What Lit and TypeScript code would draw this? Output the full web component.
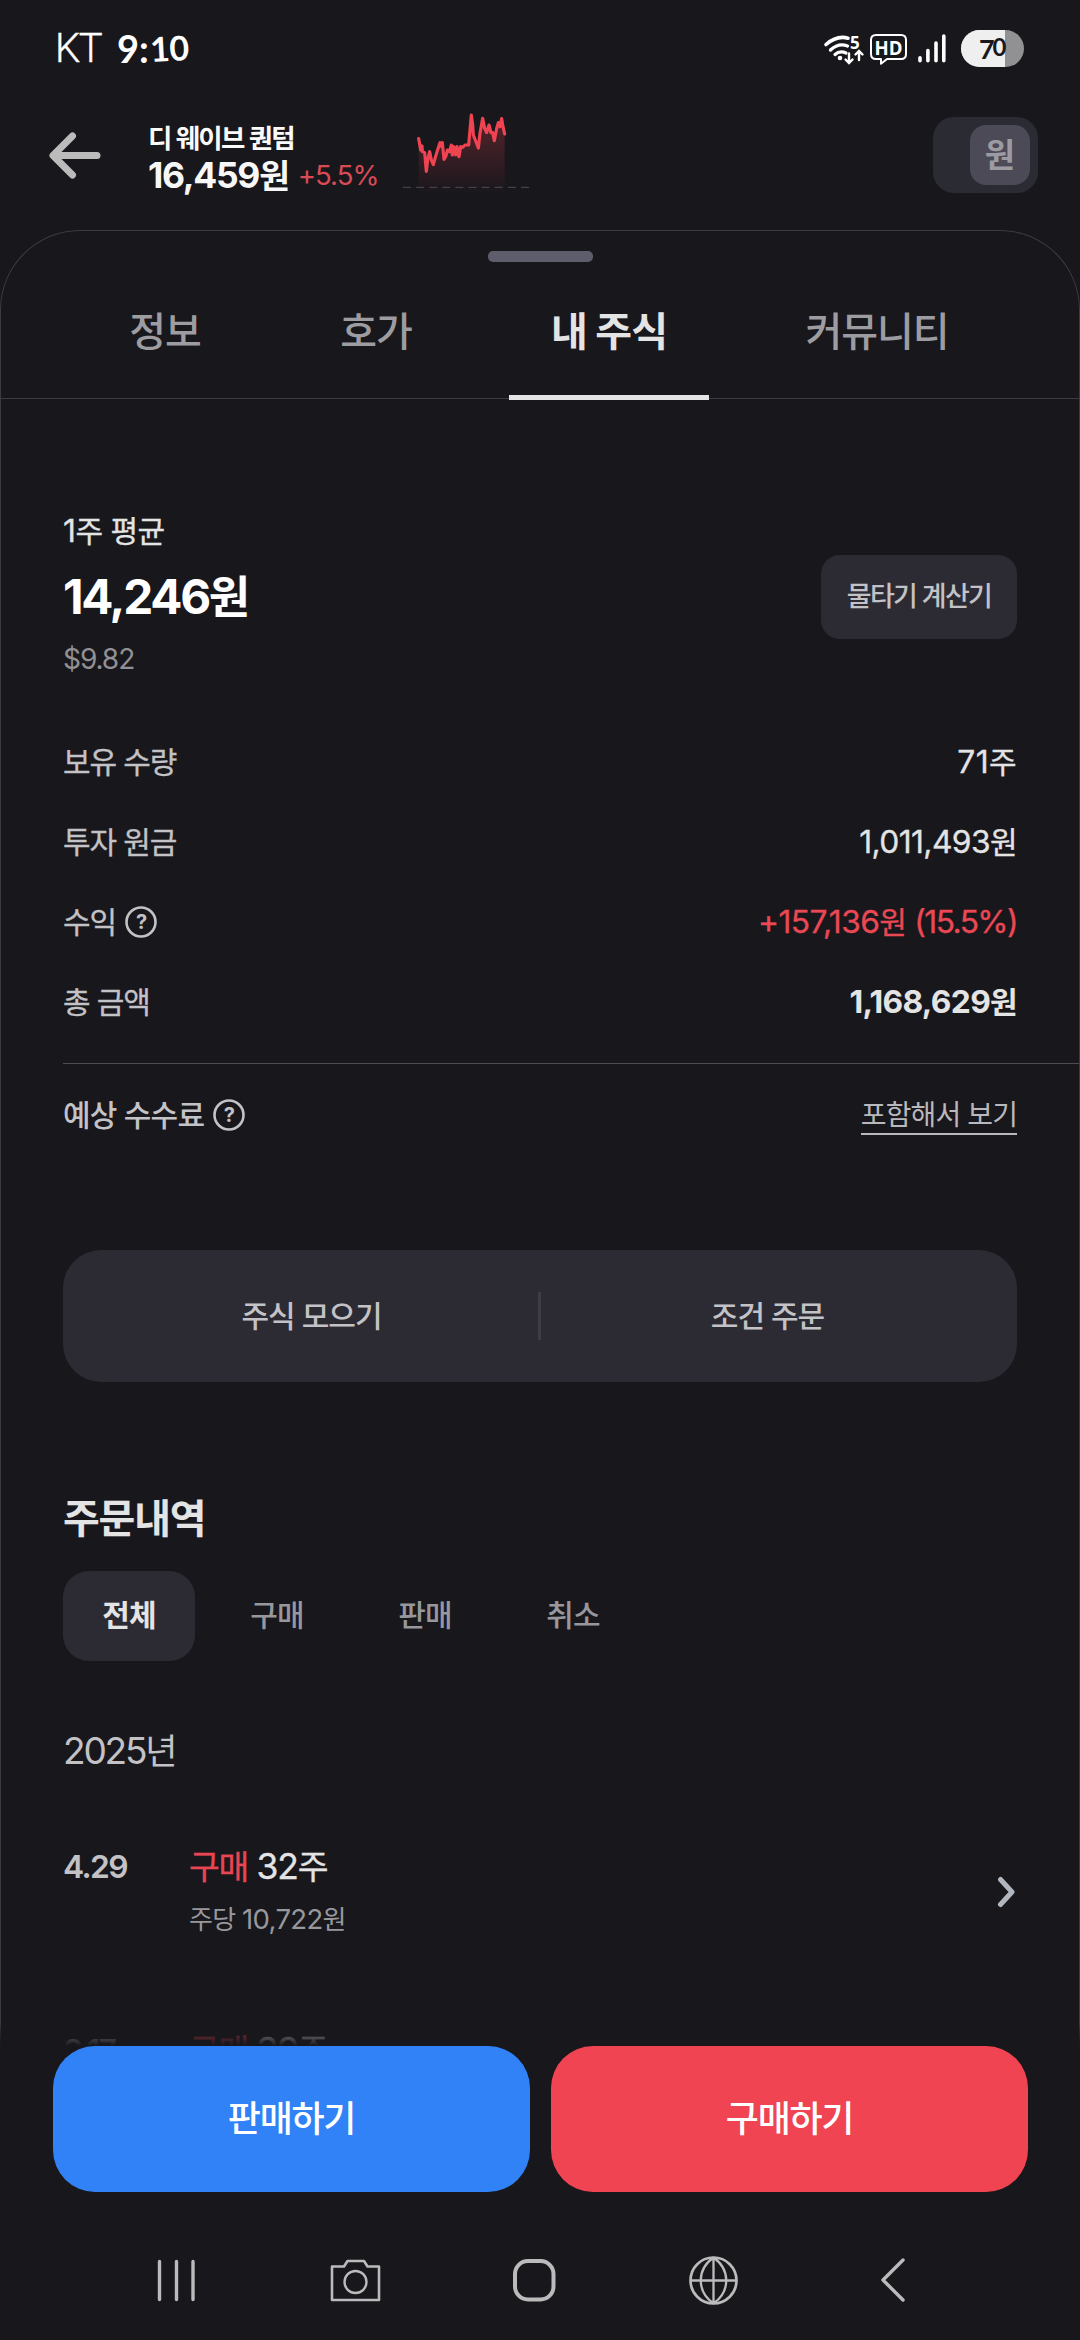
import { LitElement, html, css, svg } from "lit";
import { customElement, property } from "lit/decorators.js";
import { classMap } from "lit/directives/class-map.js";

const base = css`
  :host {
    display: block;
    font-family: Inter, "Noto Sans CJK KR", sans-serif;
    font-kerning: normal;
  }
  * {
    box-sizing: border-box;
  }
  svg {
    display: block;
    flex: none;
  }
  .n {
    font-size: 1.06em;
  }
`;

/** Splits mixed text so that Latin runs are set slightly larger than Hangul. */
const mixed = (text: string) =>
  text
    .split(/([0-9.,+%$()]+)/)
    .filter((part) => part !== "")
    .map((part) => (/^[0-9.,+%$()]/.test(part) ? html`<span class="n">${part}</span>` : part));

@customElement("status-bar")
class StatusBar extends LitElement {
  static styles = [
    base,
    css`
      :host {
        height: 100px;
      }
      .bar {
        display: flex;
        align-items: flex-start;
        height: 100px;
        padding: 0 56px 0 55px;
        color: #fff;
      }
      .carrier {
        width: 62px;
        padding-top: 29px;
        font: 300 40px/40px Roboto, sans-serif;
        letter-spacing: -1.6px;
        -webkit-text-stroke: 0.4px #fff;
      }
      .clock {
        display: flex;
        padding-top: 28px;
        font: 700 38px/40px Lato, sans-serif;
      }
      .clock .h {
        width: 21px;
      }
      .clock .c {
        width: 12px;
        padding-left: 1px;
      }
      .clock .m {
        transform: rotate(-3deg);
        font-size: 34px;
        letter-spacing: -0.5px;
      }
      .grow {
        flex: 1;
      }
      .hd,
      .batt {
        font-family: "Open Sans", sans-serif;
        font-weight: 700;
      }
      .level {
        font-family: Lato, sans-serif;
        font-weight: 700;
      }
    `,
  ];
  render() {
    return html`<div class="bar">
      <div class="carrier">KT</div>
      <div class="clock"><span class="h">9</span><span class="c">:</span><span class="m">10</span></div>
      <div class="grow"></div>
      <svg width="204" height="100" viewBox="820 0 204 100" fill="none" stroke="#fff" stroke-linecap="round">
        <path d="M826 44.5Q837 35 848 38.2" stroke-width="3.6" />
        <path d="M830.5 50Q838.5 42.5 847.5 46" stroke-width="3.4" />
        <path d="M835 54.5Q840 50 846 53" stroke-width="3.2" />
        <circle cx="840" cy="58" r="2.3" fill="#fff" stroke="none" />
        <text class="hd" x="850" y="49" font-size="17" fill="#fff" stroke="none">5</text>
        <path d="M849 53.500v9M845.500 59.500l3.500 3.500 3.500-3.500M859 60v-8.500M855.500 54.500l3.500-3.500 3.500 3.500" stroke-width="2.400" />
        <path d="M876 35h25q5 0 5 5v14q0 5-5 5h-14l-6 4.800v-4.800h-5q-5 0-5-5v-14q0-5 5-5z" stroke-width="2" stroke-linejoin="round" />
        <text class="hd" x="874.500" y="54.500" font-size="20" textLength="28" lengthAdjust="spacingAndGlyphs" fill="#fff" stroke="none">HD</text>
        <path d="M920 57.800v3M927.900 50.500v10.300M936 43v17.800M943.800 36v24.800" stroke-width="3.600" />
        <rect x="961" y="30" width="63" height="37" rx="18.500" fill="#919193" stroke="none" />
        <path d="M979.500 30H1005v37h-25.500a18.500 18.500 0 0 1 0-37z" fill="#efefef" stroke="none" />
        <text class="level" x="979" y="58.500" font-size="27" fill="#19181d" stroke="none">7</text>
        <text class="level" x="992.500" y="56" font-size="24" fill="#19181d" stroke="none">0</text>
      </svg>
    </div>`;
  }
}

const TREND =
  "86,116 92,150 96,138 97,155 104,158 109,214 113,180 119,155 124,180 130,194 136,172 142,152 146,140 150,128 155,140 157,128 162,178 168,168 172,150 178,155 184,135 187,165 191,140 197,165 201,140 207,170 212,140 218,142 225,135 236,135 240,90 244,45 248,75 250,105 256,120 265,144 270,100 278,55 284,85 290,98 297,75 303,98 308,98 313,122 320,85 325,68 330,80 335,56 339,80 344,102";

@customElement("stock-header")
class StockHeader extends LitElement {
  static styles = [
    base,
    css`
      .head {
        display: flex;
        height: 130px;
        padding-right: 42px;
      }
      .back {
        width: 148px;
      }
      .title {
        width: 242px;
        padding-top: 23px;
      }
      .name {
        height: 30px;
        line-height: 30px;
        font-size: 26.500px;
        font-weight: 600;
        letter-spacing: -1.700px;
        color: #fafafa;
        white-space: nowrap;
      }
      .price {
        display: flex;
        height: 45px;
        align-items: center;
        gap: 9px;
        line-height: 45px;
        white-space: nowrap;
      }
      .won {
        font-size: 33.500px;
        font-weight: 700;
        letter-spacing: -1.300px;
        color: #f7f7f8;
      }
      .rate {
        font-size: 26px;
        letter-spacing: -0.900px;
        color: #d94a55;
      }
      .grow {
        flex: 1;
      }
      .switch {
        display: flex;
        justify-content: flex-end;
        width: 105px;
        height: 76px;
        margin-top: 17px;
        padding: 8px;
        border-radius: 21px;
        background: #2b2b33;
      }
      .knob {
        width: 60px;
        height: 60px;
        border-radius: 16px;
        background: #4b4a56;
        color: #9c9ba1;
        font-size: 33px;
        font-weight: 700;
        line-height: 60px;
        text-align: center;
      }
    `,
  ];
  render() {
    return html`<div class="head">
      <svg class="back" width="148" height="130" viewBox="0 100 148 130" fill="none" stroke="#bbb" stroke-width="7" stroke-linecap="round" stroke-linejoin="round">
        <path d="M72.500 136L53 155.500 72.500 175M54 155.500H97" />
      </svg>
      <div class="title">
        <div class="name">디 웨이브 퀀텀</div>
        <div class="price"><span class="won">${mixed("16,459원")}</span><span class="rate">${mixed("+5.5%")}</span></div>
      </div>
      <svg width="160" height="100" viewBox="0 0 480 300" fill="none">
        <defs>
          <linearGradient id="g" x1="0" y1="40" x2="0" y2="285" gradientUnits="userSpaceOnUse">
            <stop offset="0" stop-color="#f04452" stop-opacity=".3" />
            <stop offset="1" stop-color="#f04452" stop-opacity="0" />
          </linearGradient>
        </defs>
        <polygon points="86,285 ${TREND} 344,285" fill="url(#g)" />
        <path d="M39 262H418" stroke="#4c4c52" stroke-width="3" stroke-dasharray="24 15.300" />
        <polyline points="${TREND}" stroke="#f04452" stroke-width="9.500" stroke-linejoin="round" stroke-linecap="round" />
      </svg>
      <div class="grow"></div>
      <div class="switch"><div class="knob">원</div></div>
    </div>`;
  }
}

@customElement("tab-strip")
class TabStrip extends LitElement {
  static styles = [
    base,
    css`
      .tabs {
        display: flex;
        height: 135px;
        padding-left: 90px;
        border-bottom: 1px solid #3c3b41;
      }
      .tab {
        height: 136px;
        line-height: 135px;
        font-size: 40px;
        font-weight: 500;
        letter-spacing: -1px;
        color: #9d9ca1;
        text-align: center;
        white-space: nowrap;
      }
      .short {
        width: 150px;
        margin-right: 61px;
      }
      .wide {
        width: 222px;
        margin-left: 57px;
      }
      .on {
        width: 200px;
        margin-left: -3px;
        border-bottom: 5px solid #e4e4e5;
        color: #e4e4e5;
        font-weight: 700;
      }
    `,
  ];
  render() {
    const tabs = [
      ["정보", "short"],
      ["호가", "short"],
      ["내 주식", "on"],
      ["커뮤니티", "wide"],
    ];
    return html`<div class="tabs">
      ${tabs.map(([t, k]) => html`<div class=${classMap({ tab: true, [k]: true })}>${t}</div>`)}
    </div>`;
  }
}

@customElement("help-mark")
class HelpMark extends LitElement {
  static styles = [
    base,
    css`
      text {
        font-weight: 700;
        -webkit-text-stroke: 0;
      }
    `,
  ];
  render() {
    return html`<svg width="32" height="32" viewBox="0 0 32 32">
      <circle cx="16" cy="16" r="14.500" fill="none" stroke="#c3c2c6" stroke-width="2.600" />
      <text x="16" y="23" font-size="20" text-anchor="middle" fill="#c3c2c6">?</text>
    </svg>`;
  }
}

@customElement("holding-summary")
class HoldingSummary extends LitElement {
  static styles = [
    base,
    css`
      .avg {
        display: flex;
        justify-content: space-between;
        padding: 109px 63px 0;
        height: 323px;
      }
      .cap {
        height: 45px;
        line-height: 45px;
        font-size: 30px;
        letter-spacing: -0.500px;
        color: #e4e4e5;
        -webkit-text-stroke: 0.3px #e4e4e5;
      }
      .big {
        height: 88px;
        line-height: 88px;
        font-size: 45px;
        font-weight: 700;
        letter-spacing: -2.300px;
        color: #fff;
      }
      .usd {
        height: 36px;
        line-height: 36px;
        font-size: 26.500px;
        letter-spacing: -1.100px;
        color: #909095;
      }
      .calc {
        width: 196px;
        height: 84px;
        margin-top: 47px;
        border-radius: 19px;
        background: #2c2b34;
        color: #c3c2c6;
        font-size: 27px;
        font-weight: 500;
        letter-spacing: -1.700px;
        line-height: 84px;
        text-align: center;
      }
      .row {
        display: flex;
        align-items: center;
        height: 80px;
        padding: 0 63px;
        line-height: 80px;
        font-size: 30px;
        letter-spacing: -1.100px;
        color: #c3c2c6;
        white-space: nowrap;
        -webkit-text-stroke: 0.3px;
      }
      .row help-mark {
        margin: 0 0 0 9px;
      }
      .val {
        margin-left: auto;
        color: #e4e4e5;
        letter-spacing: -0.600px;
      }
      .up {
        color: #ea4855;
      }
      .pct {
        margin-left: 8px;
        letter-spacing: -1.600px;
      }
      .count {
        letter-spacing: 0.400px;
      }
      .sum {
        font-weight: 700;
        letter-spacing: -0.700px;
        -webkit-text-stroke: 0;
      }
      .fee {
        height: 103px;
        margin-left: 63px;
        margin-top: 21px;
        padding-left: 0;
        border-top: 1px solid #4d4c52;
        letter-spacing: -0.800px;
        -webkit-text-stroke: 0;
      }
      .fee .label {
        font-weight: 500;
      }
      .link {
        height: 36px;
        margin: 4px 0 0 auto;
        border-bottom: 2px solid #b9b8bd;
        line-height: 32px;
        font-size: 28px;
        letter-spacing: -0.900px;
        color: #b9b8bd;
      }
    `,
  ];
  render() {
    return html`<div class="avg">
        <div>
          <div class="cap">${mixed("1주 평균")}</div>
          <div class="big">${mixed("14,246원")}</div>
          <div class="usd">${mixed("$9.82")}</div>
        </div>
        <div class="calc">물타기 계산기</div>
      </div>
      <div class="row">보유 수량<span class="val count">${mixed("71주")}</span></div>
      <div class="row">투자 원금<span class="val">${mixed("1,011,493원")}</span></div>
      <div class="row">수익<help-mark></help-mark><span class="val up">${mixed("+157,136원")}</span><span class="up pct">${mixed("(15.5%)")}</span></div>
      <div class="row">총 금액<span class="val sum">${mixed("1,168,629원")}</span></div>
      <div class="row fee"><span class="label">예상 수수료</span><help-mark></help-mark><span class="link">포함해서 보기</span></div>`;
  }
}

@customElement("order-row")
class OrderRow extends LitElement {
  @property() date = "";
  @property() shares = "";
  @property() price = "";
  static styles = [
    base,
    css`
      .order {
        display: flex;
        height: 184px;
        padding: 0 63px;
        white-space: nowrap;
      }
      .date {
        width: 126px;
        line-height: 48px;
        font-size: 30px;
        font-weight: 600;
        letter-spacing: -1.600px;
        color: #c3c2c6;
      }
      .what {
        height: 48px;
        line-height: 48px;
        font-size: 33.500px;
        letter-spacing: -1.200px;
        color: #e4e4e5;
        -webkit-text-stroke: 0.3px;
      }
      .buy {
        color: #e84653;
      }
      .per {
        height: 36px;
        margin-top: 10px;
        line-height: 36px;
        font-size: 26px;
        letter-spacing: -0.700px;
        color: #98979c;
      }
      .go {
        margin: 32.500px 0 0 auto;
      }
    `,
  ];
  render() {
    return html`<div class="order">
      <div class="date">${mixed(this.date)}</div>
      <div>
        <div class="what"><span class="buy">구매</span> ${mixed(this.shares)}</div>
        <div class="per">${mixed(this.price)}</div>
      </div>
      <svg class="go" width="24" height="32" viewBox="0 0 24 32" fill="none" stroke="#b0b7c1" stroke-width="5" stroke-linecap="round" stroke-linejoin="round">
        <path d="M7.500 3.500L19 16 7.500 28.500" />
      </svg>
    </div>`;
  }
}

@customElement("order-history")
class OrderHistory extends LitElement {
  static styles = [
    base,
    css`
      .pair {
        display: flex;
        align-items: center;
        height: 132px;
        margin: 84px 63px 0;
        padding: 0 23px 0 22px;
        border-radius: 38px;
        background: #2c2b34;
        color: #c3c2c6;
        font-size: 30px;
        font-weight: 500;
        letter-spacing: -1px;
        line-height: 131px;
        text-align: center;
      }
      .half {
        flex: 1;
      }
      .rule {
        width: 3px;
        height: 48px;
        background: #3d3c47;
      }
      .title {
        height: 60px;
        margin: 107px 63px 0;
        line-height: 60px;
        font-size: 40px;
        font-weight: 700;
        letter-spacing: -1.200px;
        color: #e4e4e5;
      }
      .chips {
        display: flex;
        gap: 16px;
        height: 90px;
        margin: 22px 63px 0;
      }
      .chip {
        width: 132px;
        border-radius: 26px;
        line-height: 89px;
        font-size: 30px;
        font-weight: 500;
        letter-spacing: -0.800px;
        color: #98979c;
        text-align: center;
      }
      .sel {
        background: #2c2b34;
        color: #e4e4e5;
        font-weight: 700;
      }
      .year {
        height: 50px;
        margin: 65px 63px 67px;
        line-height: 50px;
        font-size: 35px;
        letter-spacing: -2.200px;
        color: #c3c2c6;
      }
    `,
  ];
  render() {
    return html`<div class="pair"><div class="half">주식 모으기</div><div class="rule"></div><div class="half">조건 주문</div></div>
      <div class="title">주문내역</div>
      <div class="chips">
        ${["전체", "구매", "판매", "취소"].map((t, i) => html`<div class=${classMap({ chip: true, sel: i === 0 })}>${t}</div>`)}
      </div>
      <div class="year">${mixed("2025년")}</div>
      <order-row date="4.29" shares="32주" price="주당 10,722원"></order-row>
      <order-row date="3.17" shares="39주" price=""></order-row>`;
  }
}

@customElement("action-bar")
class ActionBar extends LitElement {
  static styles = [
    base,
    css`
      .actions {
        position: relative;
        display: flex;
        gap: 21px;
        height: 146px;
        padding: 0 52px 0 53px;
      }
      .actions::before {
        content: "";
        position: absolute;
        left: 0;
        right: 0;
        bottom: 100%;
        height: 24px;
        background: linear-gradient(rgba(24, 23, 28, 0), rgba(24, 23, 28, 0.6) 45%, #18171c);
      }
      .btn {
        flex: 1;
        border-radius: 42px;
        color: #fff;
        font-size: 36px;
        font-weight: 500;
        letter-spacing: -1.300px;
        line-height: 146px;
        text-align: center;
      }
      .sell {
        background: #3182f6;
      }
      .buy {
        background: #f04452;
      }
    `,
  ];
  render() {
    return html`<div class="actions"><div class="btn sell">판매하기</div><div class="btn buy">구매하기</div></div>`;
  }
}

@customElement("system-nav")
class SystemNav extends LitElement {
  static styles = [
    base,
    css`
      .nav {
        display: flex;
        align-items: center;
        gap: 119px;
        height: 148px;
        padding: 28px 0 0 146px;
      }
    `,
  ];
  render() {
    const glyphs = [
      svg`<path d="M13.500 11.500v38M30.500 11.500v38M47 11.500v38" stroke-width="3.400" stroke-linecap="round"/>`,
      svg`<path d="M7 16.500H19l3.500-5.500H39l3.500 5.500H54V50H7z" stroke-width="2.600" stroke-linejoin="round"/><circle cx="30.500" cy="32" r="11" stroke-width="2.400"/>`,
      svg`<rect x="11" y="11" width="38.500" height="38.500" rx="13" stroke-width="4"/>`,
      svg`<circle cx="30.500" cy="30.500" r="23" stroke-width="2.700"/><path d="M30.500 7.500v46M7.500 30.500h46M30.500 7.500c-17 12-17 34 0 46M30.500 7.500c17 12 17 34 0 46" stroke-width="2.300"/>`,
      svg`<path d="M41 10L21 30 41 50" stroke-width="3.400" stroke-linecap="round" stroke-linejoin="round"/>`,
    ];
    return html`<div class="nav">
      ${glyphs.map((g) => html`<svg width="60" height="60" viewBox="0 0 60 60" fill="none" stroke="#bbb">${g}</svg>`)}
    </div>`;
  }
}

@customElement("app-root")
class AppRoot extends LitElement {
  static styles = [
    base,
    css`
      :host {
        width: 1080px;
        height: 2340px;
        overflow: hidden;
        background: #18171c;
      }
      .sheet {
        height: 1816px;
        border: 1px solid #3c3b41;
        border-bottom: 0;
        border-radius: 80px 80px 0 0;
        overflow: hidden;
      }
      .body {
        margin: 0 -1px;
      }
      .grip {
        width: 105px;
        height: 11px;
        margin: 20px auto 2px 488px;
        border-radius: 5px;
        background: #5e5d6b;
      }
    `,
  ];
  render() {
    return html`<status-bar></status-bar>
      <stock-header></stock-header>
      <div class="sheet">
        <div class="body">
          <div class="grip"></div>
          <tab-strip></tab-strip>
          <holding-summary></holding-summary>
          <order-history></order-history>
        </div>
      </div>
      <action-bar></action-bar>
      <system-nav></system-nav>`;
  }
}
